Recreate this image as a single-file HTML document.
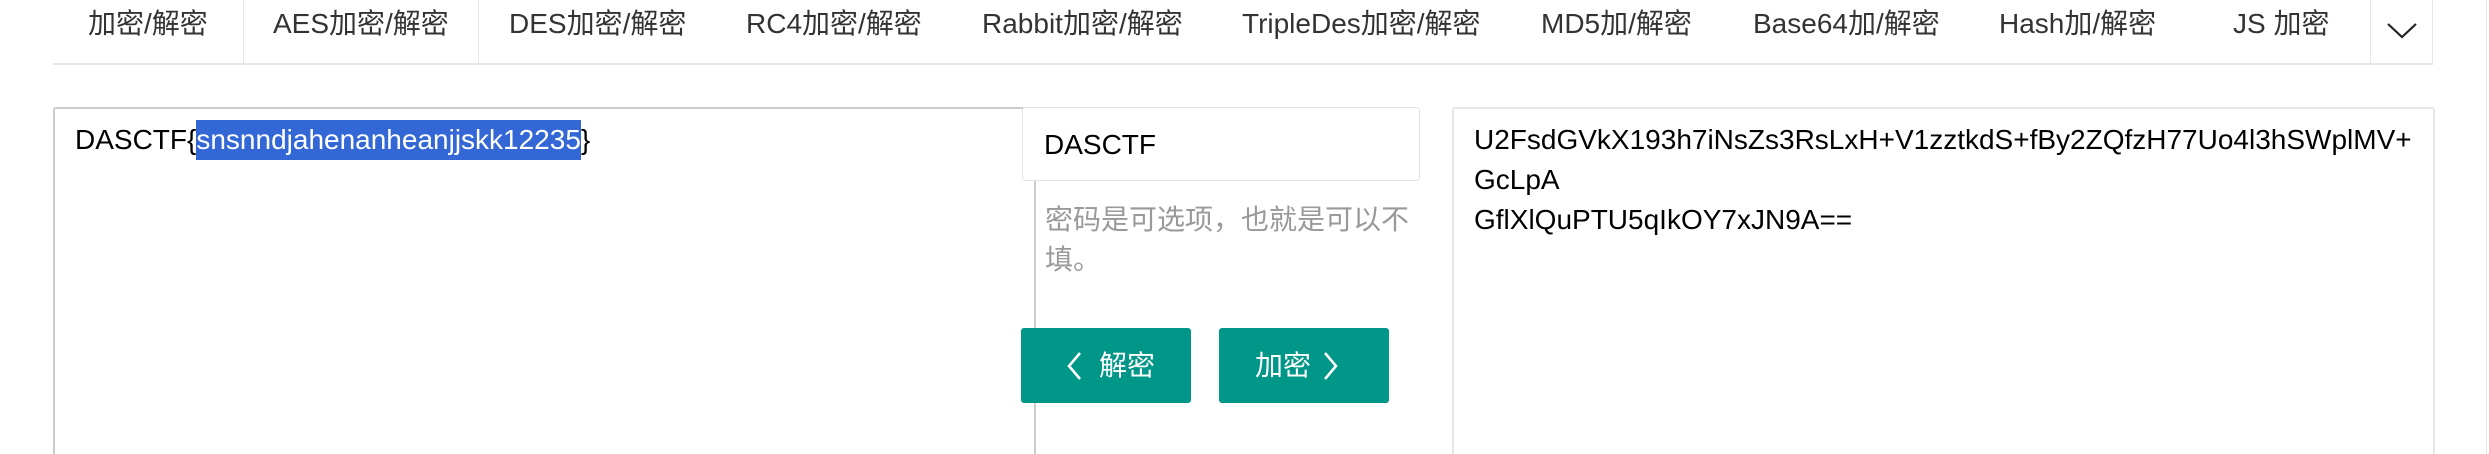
<!DOCTYPE html>
<html><head><meta charset="utf-8">
<style>
html,body{margin:0;padding:0;background:#fff;width:2489px;height:454px;overflow:hidden;position:relative;
font-family:"Liberation Sans","Noto Sans CJK SC",sans-serif;font-size:28px;}
.a{position:absolute;white-space:nowrap;}
.tab{position:absolute;top:0;line-height:48px;color:#333;white-space:nowrap;}
.l{line-height:40px;color:#000;}
.btn{position:absolute;top:328px;width:170px;height:75px;background:#009688;border-radius:3px;color:#fff;}
</style></head><body>
<!-- nav -->
<div class="a" style="left:53px;top:63px;width:2380px;height:2px;background:#e6e6e6"></div>
<div class="a" style="left:243px;top:0;width:1px;height:64px;background:#e6e6e6"></div>
<div class="a" style="left:478px;top:0;width:1px;height:64px;background:#e6e6e6"></div>
<div class="a" style="left:2370px;top:0;width:1px;height:64px;background:#e6e6e6"></div>
<div class="a" style="left:2432px;top:0;width:1px;height:65px;background:#e6e6e6"></div>
<div class="a" style="left:2486px;top:0;width:1px;height:454px;background:#e6e6e6"></div>
<div class="tab" style="left:88px">加密/解密</div>
<div class="tab" style="left:273px">AES加密/解密</div>
<div class="tab" style="left:509px">DES加密/解密</div>
<div class="tab" style="left:746px">RC4加密/解密</div>
<div class="tab" style="left:982px">Rabbit加密/解密</div>
<div class="tab" style="left:1242px">TripleDes加密/解密</div>
<div class="tab" style="left:1541px">MD5加/解密</div>
<div class="tab" style="left:1753px">Base64加/解密</div>
<div class="tab" style="left:1999px">Hash加/解密</div>
<div class="tab" style="left:2233px">JS 加密</div>
<svg class="a" style="left:2386px;top:20px" width="32" height="20" viewBox="0 0 32 20"><path d="M2 4 L16 17 L30 4" fill="none" stroke="#222" stroke-width="2.2"/></svg>
<!-- left textarea -->
<div class="a" style="left:53px;top:107px;width:990px;height:360px;border-top:2px solid #ccc;border-left:2px solid #ccc;border-radius:3px 0 0 0"></div>
<div class="a" style="left:1034px;top:181px;width:2px;height:280px;background:#ccc"></div>
<div class="a l" style="left:75px;top:120px">DASCTF{<span style="background:#3367d6;color:#fff;display:inline-block;height:40px">snsnndjahenanheanjjskk12235</span>}</div>
<!-- key -->
<div class="a" style="left:1022px;top:107px;width:396px;height:72px;border:1px solid #e2e2e2;border-radius:3px;background:#fff"></div>
<div class="a l" style="left:1044px;top:125px">DASCTF</div>
<div class="a l" style="left:1045px;top:200px;color:#999">密码是可选项，也就是可以不<br>填。</div>
<div class="btn" style="left:1021px">
<svg class="a" style="left:44px;top:23px" width="20" height="30" viewBox="0 0 20 30"><path d="M15 2 L4 15 L15 28" fill="none" stroke="#fff" stroke-width="2.6"/></svg>
<div class="a" style="left:78px;top:0;line-height:75px">解密</div></div>
<div class="btn" style="left:1219px">
<div class="a" style="left:36px;top:0;line-height:75px">加密</div>
<svg class="a" style="left:101px;top:23px" width="20" height="30" viewBox="0 0 20 30"><path d="M5 2 L16 15 L5 28" fill="none" stroke="#fff" stroke-width="2.6"/></svg></div>
<!-- right -->
<div class="a" style="left:1452px;top:107px;width:979px;height:360px;border:2px solid #e6e6e6;border-radius:3px"></div>
<div class="a l" style="left:1474px;top:120px">U2FsdGVkX193h7iNsZs3RsLxH+V1zztkdS+fBy2ZQfzH77Uo4l3hSWplMV+<br>GcLpA<br>GflXlQuPTU5qIkOY7xJN9A==</div>
</body></html>
